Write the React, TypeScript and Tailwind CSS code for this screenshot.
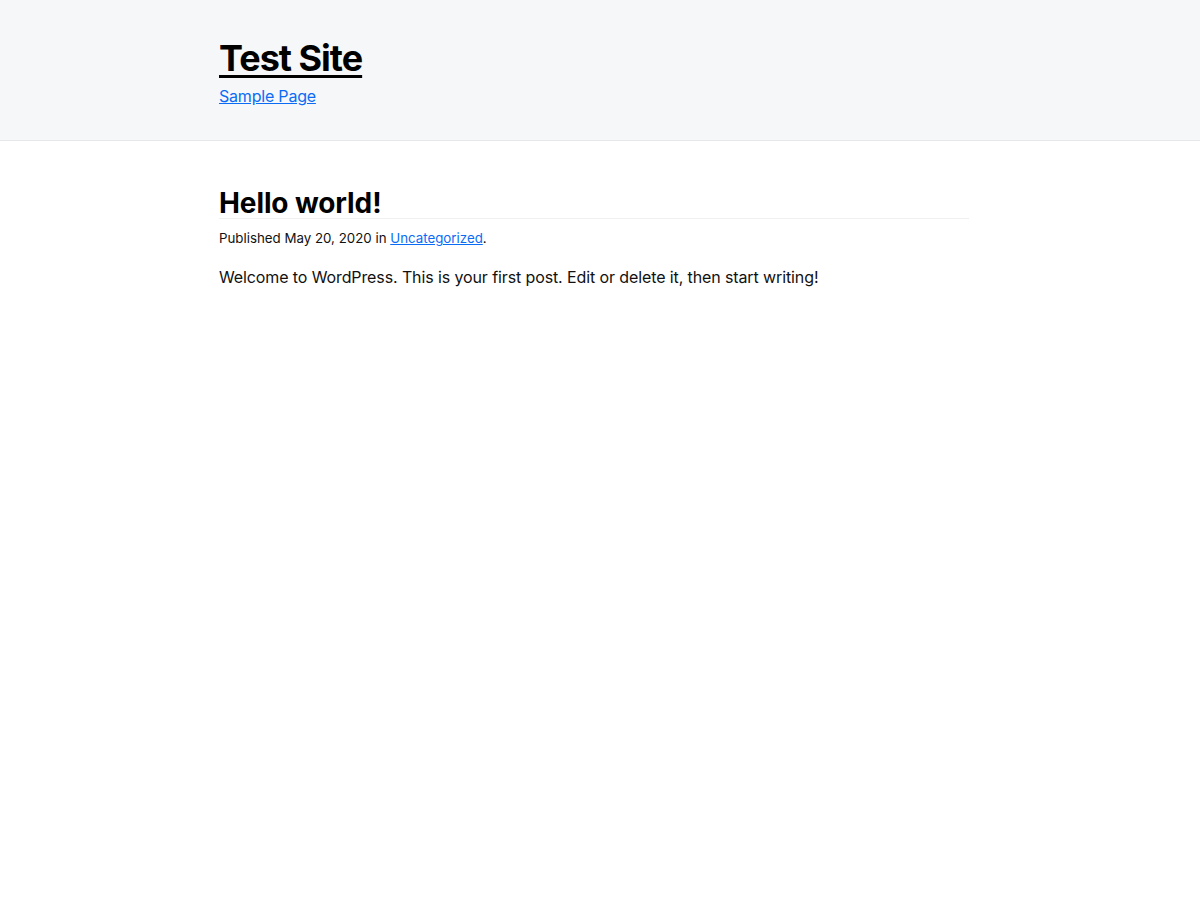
export default function App() {
  return (
    <div className="min-h-[900px] bg-white text-[#111] font-['Inter',sans-serif]">
      <header className="bg-[#f6f7f9] border-b border-[#e5e7ea] h-[141px]">
        <div className="w-[750px] ml-[219px] pt-[36px]">
          <h1 className="text-[36px] leading-[44px] font-bold tracking-[-1px]">
            <a href="#" className="text-black underline decoration-[3px] underline-offset-[4px]">
              Test Site
            </a>
          </h1>
          <nav className="mt-[4px]">
            <a href="#" className="text-[16px] leading-[22px] tracking-[-0.2px] text-[#0a6cf5] underline">
              Sample Page
            </a>
          </nav>
        </div>
      </header>
      <main className="w-[750px] ml-[219px] pt-[47px]">
        <article>
          <h2 className="text-[28px] leading-[30px] font-bold text-black tracking-[-0.1px] border-b border-[#f0f0f0]">
            Hello world!
          </h2>
          <p className="text-[13.3px] leading-[20px] mt-[9px] text-[#111]">
            Published May 20, 2020 in{" "}
            <a href="#" className="text-[#0a6cf5] underline">
              Uncategorized
            </a>
            .
          </p>
          <p className="text-[16px] leading-[24px] mt-[17px] tracking-[-0.11px] text-[#111]">
            Welcome to WordPress. This is your first post. Edit or delete it, then start writing!
          </p>
        </article>
      </main>
    </div>
  );
}
